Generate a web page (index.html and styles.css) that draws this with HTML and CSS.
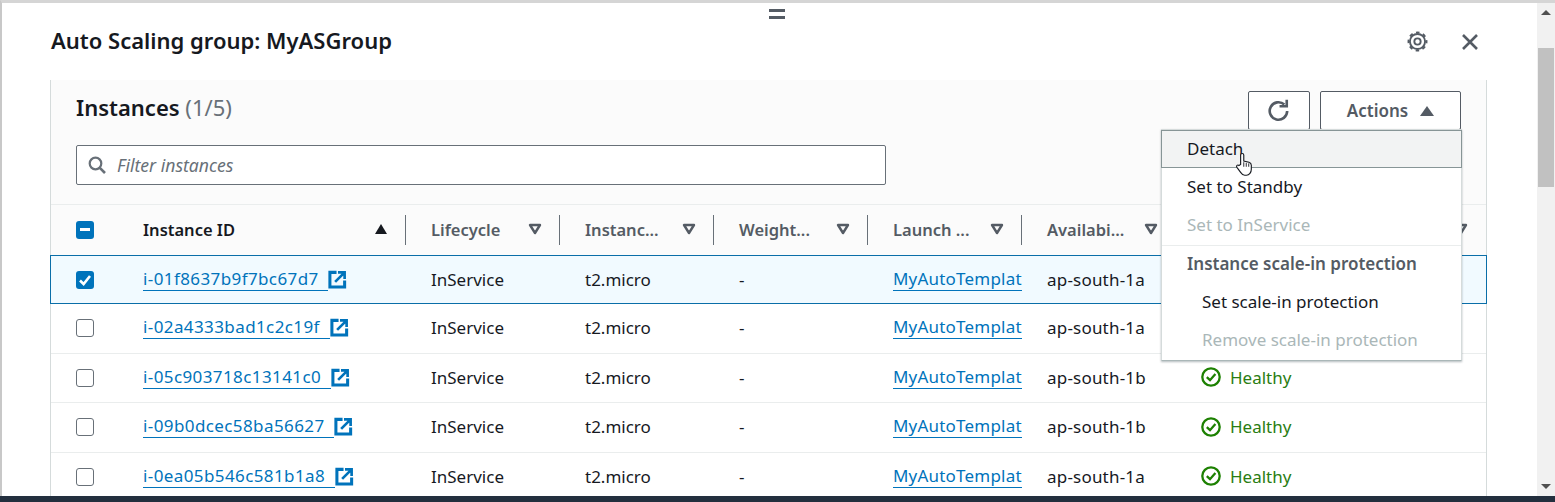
FILE: index.html
```html
<!DOCTYPE html>
<html>
<head>
    <meta charset="utf-8">
    <title>Auto Scaling group: MyASGroup</title>
    <link rel="stylesheet" href="styles.css">
</head>
<body>
    <svg class="defs" width="0" height="0">
      <symbol id="ext" viewBox="0 0 20 20">
        <path d="M9 2.500H2v15.500h15.500V11" fill="none" stroke="currentColor" stroke-width="3.200"/>
        <path d="M7.500 12.500 17 3M10.500 2.500h7V9.500" fill="none" stroke="currentColor" stroke-width="2.800"/>
      </symbol>
      <symbol id="filter" viewBox="0 0 14 12">
        <path d="M2 2h10L7 10z" fill="none" stroke="currentColor" stroke-width="2.400" stroke-linejoin="round"/>
      </symbol>
      <symbol id="ok" viewBox="0 0 20 20">
        <circle cx="10" cy="10" r="8.700" fill="none" stroke="currentColor" stroke-width="2.300"/>
        <path d="M5.800 10.200 9 13.200 14.400 7" fill="none" stroke="currentColor" stroke-width="2.300"/>
      </symbol>
      <symbol id="tick" viewBox="0 0 18 18">
        <path d="M4 9.500 7.600 13 14 5" fill="none" stroke="#fff" stroke-width="2.600"/>
      </symbol>
    </svg>

    <div class="screen">
      <div class="content">
        <div class="handle"></div>
        <header class="top">
          <h1>Auto Scaling group: MyASGroup</h1>
          <div class="top-icons">
            <svg class="gear" viewBox="0 0 20 20" width="21" height="21">
              <circle cx="10" cy="10" r="7.200" fill="none" stroke="#545b64" stroke-width="1.800"/>
              <circle cx="10" cy="10" r="8.600" fill="none" stroke="#545b64" stroke-width="1.800" stroke-dasharray="3.400 3.350" stroke-dashoffset="1.700"/>
              <circle cx="10" cy="10" r="3" fill="none" stroke="#545b64" stroke-width="1.800"/>
            </svg>
            <svg class="close" viewBox="0 0 18 18" width="18" height="18">
              <path d="M2 2l14 14M16 2 2 16" stroke="#545b64" stroke-width="2.600" fill="none"/>
            </svg>
          </div>
        </header>

        <section class="panel">
          <div class="panel-head">
            <div class="title-row">
              <h2>Instances <span class="count">(1/5)</span></h2>
              <div class="actions">
                <button class="btn btn-icon">
                  <svg viewBox="0 0 22 22" width="24" height="24">
                    <path d="M18.500 11a8 8 0 1 1-2.600-5.900" fill="none" stroke="#545b64" stroke-width="2.400"/>
                    <path d="M11.500 6.600h6.600V0.800" fill="none" stroke="#545b64" stroke-width="2.400"/>
                  </svg>
                </button>
                <button class="btn btn-actions">Actions <i class="up"></i></button>
              </div>
            </div>
            <div class="filter">
              <svg viewBox="0 0 18 18" width="18" height="18">
                <circle cx="7.500" cy="7.500" r="5.800" fill="none" stroke="#687078" stroke-width="2.200"/>
                <path d="M11.800 11.800 17 17" stroke="#687078" stroke-width="2.600"/>
              </svg>
              <span>Filter instances</span>
            </div>
          </div>

          <div class="table">
            <div class="row head">
              <div class="cell check"><span class="box indet"></span></div>
              <div class="cell th active"><span class="label">Instance ID</span><i class="sort"></i></div>
              <div class="cell th"><span class="label">Lifecycle</span><svg class="caret"><use href="#filter"/></svg></div>
              <div class="cell th"><span class="label">Instanc...</span><svg class="caret"><use href="#filter"/></svg></div>
              <div class="cell th"><span class="label">Weight...</span><svg class="caret"><use href="#filter"/></svg></div>
              <div class="cell th"><span class="label">Launch ...</span><svg class="caret"><use href="#filter"/></svg></div>
              <div class="cell th"><span class="label">Availabi...</span><svg class="caret"><use href="#filter"/></svg></div>
              <div class="cell th last"><span class="label"></span><svg class="caret"><use href="#filter"/></svg></div>
            </div>

            <div class="row selected">
              <div class="cell check"><span class="box checked"><svg viewBox="0 0 18 18"><use href="#tick"/></svg></span></div>
              <div class="cell id"><a>i-01f8637b9f7bc67d7&nbsp;&nbsp;</a><svg class="ext"><use href="#ext"/></svg></div>
              <div class="cell">InService</div>
              <div class="cell">t2.micro</div>
              <div class="cell">-</div>
              <div class="cell tpl"><a>MyAutoTemplate</a></div>
              <div class="cell az">ap-south-1a</div>
              <div class="cell"></div>
            </div>
            <div class="row">
              <div class="cell check"><span class="box"></span></div>
              <div class="cell id"><a>i-02a4333bad1c2c19f&nbsp;&nbsp;</a><svg class="ext"><use href="#ext"/></svg></div>
              <div class="cell">InService</div>
              <div class="cell">t2.micro</div>
              <div class="cell">-</div>
              <div class="cell tpl"><a>MyAutoTemplate</a></div>
              <div class="cell az">ap-south-1a</div>
              <div class="cell"></div>
            </div>
            <div class="row">
              <div class="cell check"><span class="box"></span></div>
              <div class="cell id"><a>i-05c903718c13141c0&nbsp;&nbsp;</a><svg class="ext"><use href="#ext"/></svg></div>
              <div class="cell">InService</div>
              <div class="cell">t2.micro</div>
              <div class="cell">-</div>
              <div class="cell tpl"><a>MyAutoTemplate</a></div>
              <div class="cell az">ap-south-1b</div>
              <div class="cell ok"><svg><use href="#ok"/></svg>Healthy</div>
            </div>
            <div class="row">
              <div class="cell check"><span class="box"></span></div>
              <div class="cell id"><a>i-09b0dcec58ba56627&nbsp;&nbsp;</a><svg class="ext"><use href="#ext"/></svg></div>
              <div class="cell">InService</div>
              <div class="cell">t2.micro</div>
              <div class="cell">-</div>
              <div class="cell tpl"><a>MyAutoTemplate</a></div>
              <div class="cell az">ap-south-1b</div>
              <div class="cell ok"><svg><use href="#ok"/></svg>Healthy</div>
            </div>
            <div class="row">
              <div class="cell check"><span class="box"></span></div>
              <div class="cell id"><a>i-0ea05b546c581b1a8&nbsp;&nbsp;</a><svg class="ext"><use href="#ext"/></svg></div>
              <div class="cell">InService</div>
              <div class="cell">t2.micro</div>
              <div class="cell">-</div>
              <div class="cell tpl"><a>MyAutoTemplate</a></div>
              <div class="cell az">ap-south-1a</div>
              <div class="cell ok"><svg><use href="#ok"/></svg>Healthy</div>
            </div>
          </div>

          <!-- open dropdown, sits over the table -->
          <div class="menu">
            <div class="item hover">Detach</div>
            <div class="item">Set to Standby</div>
            <div class="item off">Set to InService</div>
            <div class="group">Instance scale-in protection</div>
            <div class="item sub">Set scale-in protection</div>
            <div class="item sub off">Remove scale-in protection</div>
          </div>
          <svg class="cursor" viewBox="0 0 16 22" width="18" height="25">
            <path d="M5 11V2.600a1.400 1.400 0 0 1 2.800 0V8l4.600 1c1.400.4 2.100 1.200 2.100 2.600v3.600c0 2.800-1.800 5.300-4.300 5.300H8.600C6.800 20.500 6 19.500 5 18L1.700 13.600c-1-1.400.6-2.800 1.800-1.700z" fill="#fff" stroke="#16191f" stroke-width="1"/>
            <path d="M7.800 9v4M10 9.500V13M12.200 10v3" stroke="#16191f" stroke-width=".8"/>
          </svg>
        </section>
      </div>

      <div class="scrollbar">
        <i class="arrow-up"></i>
        <div class="track"><div class="thumb"></div></div>
        <i class="arrow-down"></i>
      </div>
    </div>
    <div class="bottom-bar"></div>
</body>
</html>
```

FILE: styles.css
```css
* {
    box-sizing: border-box;
}

html, body {
    height: 100%;
}

body {
    margin: 0;
    display: flex;
    flex-direction: column;
    overflow: hidden;
    color: #16191f;
    background: #fff;
    font-family: "Noto Sans", "Open Sans", sans-serif;
    font-size: 17px;
}

.defs {
    position: absolute;
}

.screen {
    flex: 1;
    min-height: 0;
    display: flex;
    border-top: 3px solid #d5d5d5;
    border-left: 2px solid #c8c8c8;
}

.content {
    flex: 1;
    min-width: 0;
    overflow: hidden;
    position: relative;
}

.handle {
    position: absolute;
    left: 767px;
    top: 6px;
    width: 16px;
    height: 10px;
    border-top: 3px solid #545b64;
    border-bottom: 3px solid #545b64;
}

.top {
    height: 77px;
    padding: 0 58px 0 49px;
    display: flex;
    align-items: center;
    justify-content: space-between;
}

.top h1 {
    margin: 0 0 3px;
    font-size: 22px;
    font-weight: 600;
}

.top-icons {
    display: flex;
    align-items: center;
    gap: 33px;
}

.panel {
    position: relative;
    width: 1437px;
    margin-left: 48px;
    border-left: 1px solid #d5dbdb;
    border-right: 1px solid #d5dbdb;
}

.panel-head {
    height: 125px;
    padding: 11px 25px 0;
    background: #fbfbfb;
    border-bottom: 1px solid #eaeded;
}

.title-row {
    display: flex;
    justify-content: space-between;
}

.title-row h2 {
    margin: 1px 0 0;
    font-size: 22px;
    font-weight: 600;
}

.count {
    color: #687078;
    font-weight: 400;
}

.actions {
    display: flex;
    gap: 10px;
}

.btn {
    height: 39px;
    background: #fff;
    border: 1px solid #545b64;
    border-radius: 2px;
    font: 600 17px "Noto Sans", sans-serif;
    color: #545b64;
    display: flex;
    align-items: center;
    justify-content: center;
    padding: 0;
}

.btn-icon {
    width: 62px;
}

.btn-actions {
    width: 141px;
    gap: 12px;
}

.up {
    width: 0;
    height: 0;
    border-left: 7px solid transparent;
    border-right: 7px solid transparent;
    border-bottom: 10px solid #545b64;
}

.filter {
    width: 810px;
    height: 40px;
    margin-top: 15px;
    padding-left: 11px;
    display: flex;
    align-items: center;
    gap: 11px;
    background: #fff;
    border: 1px solid #687078;
    border-radius: 2px;
    color: #687078;
    font-style: italic;
    font-size: 17.600px;
}

.row {
    display: grid;
    grid-template-columns: 67px 288px repeat(5, 154px) 1fr;
    height: 49.500px;
    border-bottom: 1px solid #eaeded;
    align-items: center;
}

.row.head {
    height: 50px;
    border-bottom: 0;
    background: #fbfbfb;
}

.row.selected {
    height: 49px;
    background: #f1faff;
    border: 1px solid #0a6ea8;
    margin-left: -1px;
    margin-right: -1px;
}

.cell {
    padding-left: 25px;
    padding-bottom: 1px;
    white-space: nowrap;
    overflow: hidden;
    display: flex;
    align-items: center;
    color: #16191f;
    min-width: 0;
}

.az {
    letter-spacing: .2px;
}

.check {
    height: 100%;
    padding-bottom: 0;
}

.box {
    width: 18px;
    height: 18px;
    border: 1px solid #687078;
    border-radius: 3px;
    background: #fff;
    display: block;
}

.box svg {
    display: block;
    width: 18px;
    height: 18px;
}

.box.checked {
    background: #0073bb;
    border: 0;
}

.box.indet {
    background: #0073bb;
    border: 0;
    position: relative;
}

.box.indet::after {
    content: "";
    position: absolute;
    left: 4px;
    right: 4px;
    top: 7px;
    height: 3px;
    background: #fff;
}

.th {
    height: 30px;
    justify-content: space-between;
    padding-right: 17px;
    padding-bottom: 2px;
    border-right: 1px solid #687078;
    font-size: 16.500px;
    font-weight: 600;
    color: #545b64;
}

.th.active {
    color: #16191f;
    padding-right: 18px;
}

.th.last {
    border-right: 0;
    padding-right: 18px;
}

.caret {
    width: 14px;
    height: 12px;
    color: #545b64;
    flex: none;
}

.sort {
    width: 0;
    height: 0;
    border-left: 6.500px solid transparent;
    border-right: 6.500px solid transparent;
    border-bottom: 10px solid #16191f;
}

a {
    color: #0073bb;
    border-bottom: 1px solid #0073bb;
    line-height: 22px;
}

.id a {
    letter-spacing: .4px;
}

.ext {
    width: 19px;
    height: 19px;
    color: #0073bb;
    flex: none;
}

.tpl a {
    display: block;
    letter-spacing: .2px;
}

.ok {
    color: #2a7d12;
    gap: 9px;
}

.ok svg {
    width: 20px;
    height: 20px;
    flex: none;
    color: #1d8102;
}

.menu {
    position: absolute;
    left: 1110px;
    top: 49px;
    width: 301px;
    height: 232px;
    background: #fff;
    border: 1px solid #d5dbdb;
    border-bottom-color: #aab7b8;
    box-shadow: 0 1px 2px rgba(0, 28, 36, .3);
}

.item, .group {
    height: 38.300px;
    padding-left: 25px;
    padding-bottom: 2px;
    display: flex;
    align-items: center;
    white-space: nowrap;
}

.item.hover {
    background: #f2f3f3;
    border: 1px solid #879596;
    margin: 0 -1px;
}

.item.off {
    color: #aab7b8;
}

.item.sub {
    padding-left: 40px;
}

.group {
    font-weight: 600;
    color: #545b64;
    border-top: 1px solid #eaeded;
}

.cursor {
    position: absolute;
    left: 1184px;
    top: 72px;
}

.scrollbar {
    width: 18px;
    flex: none;
    display: flex;
    flex-direction: column;
    align-items: center;
    background: #f1f1f1;
}

.track {
    flex: 1;
    width: 100%;
    padding: 26px 1px 0;
}

.thumb {
    height: 139px;
    background: #c1c1c1;
}

.arrow-up, .arrow-down {
    margin: 7px 0;
    width: 0;
    height: 0;
    border-left: 5px solid transparent;
    border-right: 5px solid transparent;
}

.arrow-up {
    border-bottom: 5px solid #505050;
}

.arrow-down {
    border-top: 5px solid #505050;
}

.bottom-bar {
    flex: none;
    height: 6px;
    background: #232f3e;
}
```
